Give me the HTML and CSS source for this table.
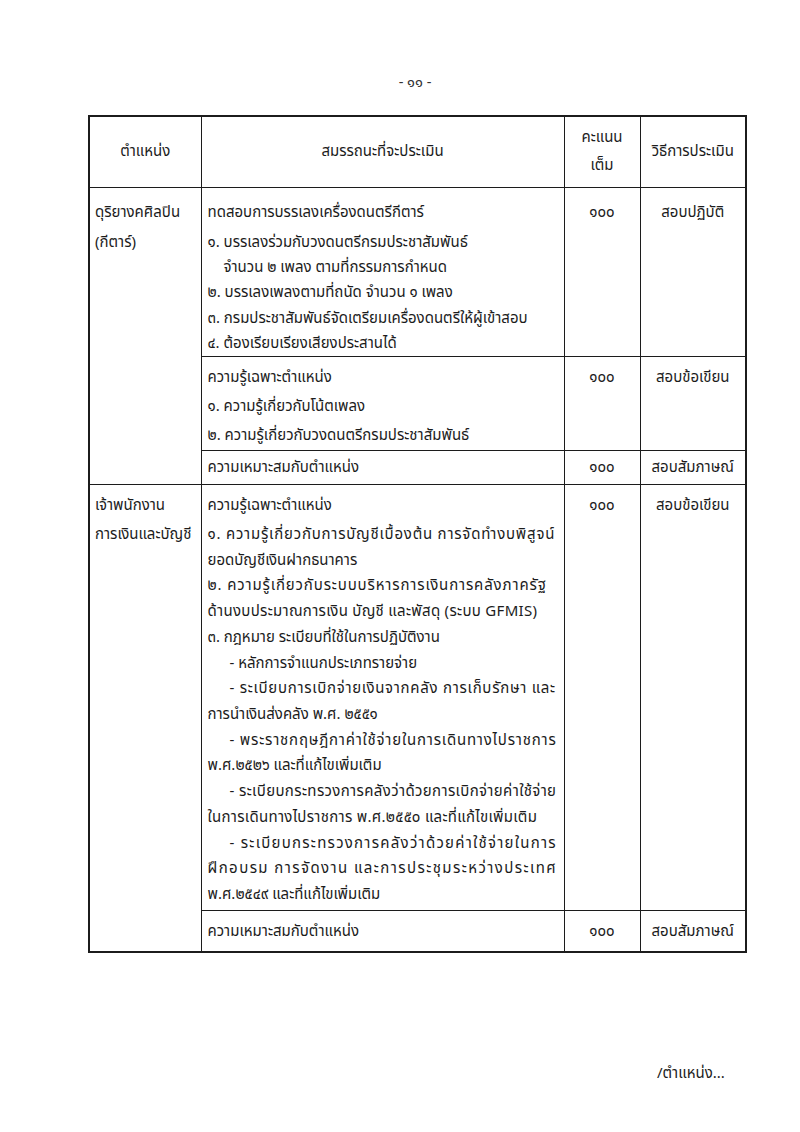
FILE: index.html
```html
<!DOCTYPE html>
<html lang="th">
<head>
<meta charset="utf-8">
<link rel="stylesheet" href="styles.css">
</head>
<body>
<div class="page">
  <div class="pageno">- ๑๑ -</div>
  <table class="grid">
    <colgroup>
      <col class="c1"><col class="c2"><col class="c3"><col class="c4">
    </colgroup>
    <thead>
      <tr class="rh">
        <th>ตำแหน่ง</th>
        <th>สมรรถนะที่จะประเมิน</th>
        <th><div>คะแนน</div><div class="mt">เต็ม</div></th>
        <th>วิธีการประเมิน</th>
      </tr>
    </thead>
    <tbody>
      <tr class="r1">
        <td rowspan="3" class="pos"><div class="l first">ดุริยางคศิลปิน</div><div class="l">(กีตาร์)</div></td>
        <td class="desc">
          <div class="l first">ทดสอบการบรรเลงเครื่องดนตรีกีตาร์</div>
          <div class="l">๑. บรรเลงร่วมกับวงดนตรีกรมประชาสัมพันธ์</div>
          <div class="l ind">จำนวน ๒ เพลง ตามที่กรรมการกำหนด</div>
          <div class="l">๒. บรรเลงเพลงตามที่ถนัด จำนวน ๑ เพลง</div>
          <div class="l">๓. กรมประชาสัมพันธ์จัดเตรียมเครื่องดนตรีให้ผู้เข้าสอบ</div>
          <div class="l">๔. ต้องเรียบเรียงเสียงประสานได้</div>
        </td>
        <td class="score"><div class="l">๑๐๐</div></td>
        <td class="method"><div class="l">สอบปฏิบัติ</div></td>
      </tr>
      <tr class="r2">
        <td class="desc">
          <div class="l">ความรู้เฉพาะตำแหน่ง</div>
          <div class="l">๑. ความรู้เกี่ยวกับโน้ตเพลง</div>
          <div class="l">๒. ความรู้เกี่ยวกับวงดนตรีกรมประชาสัมพันธ์</div>
        </td>
        <td class="score"><div class="l">๑๐๐</div></td>
        <td class="method"><div class="l">สอบข้อเขียน</div></td>
      </tr>
      <tr class="r3">
        <td class="desc"><div class="l">ความเหมาะสมกับตำแหน่ง</div></td>
        <td class="score"><div class="l">๑๐๐</div></td>
        <td class="method"><div class="l">สอบสัมภาษณ์</div></td>
      </tr>
      <tr class="r4">
        <td rowspan="2" class="pos"><div class="l first">เจ้าพนักงาน</div><div class="l">การเงินและบัญชี</div></td>
        <td class="desc">
          <div class="l first">ความรู้เฉพาะตำแหน่ง</div>
          <div class="l ls-a">๑. ความรู้เกี่ยวกับการบัญชีเบื้องต้น การจัดทำงบพิสูจน์</div>
          <div class="l">ยอดบัญชีเงินฝากธนาคาร</div>
          <div class="l ls-b">๒. ความรู้เกี่ยวกับระบบบริหารการเงินการคลังภาครัฐ</div>
          <div class="l ls-w">ด้านงบประมาณการเงิน บัญชี และพัสดุ (ระบบ GFMIS)</div>
          <div class="l">๓. กฎหมาย ระเบียบที่ใช้ในการปฏิบัติงาน</div>
          <div class="l ind2">- หลักการจำแนกประเภทรายจ่าย</div>
          <div class="l ind2 ls-c">- ระเบียบการเบิกจ่ายเงินจากคลัง การเก็บรักษา และ</div>
          <div class="l">การนำเงินส่งคลัง พ.ศ. ๒๕๕๑</div>
          <div class="l ind2 ls-d">- พระราชกฤษฎีกาค่าใช้จ่ายในการเดินทางไปราชการ</div>
          <div class="l">พ.ศ.๒๕๒๖ และที่แก้ไขเพิ่มเติม</div>
          <div class="l ind2 ls-e">- ระเบียบกระทรวงการคลังว่าด้วยการเบิกจ่ายค่าใช้จ่าย</div>
          <div class="l ls-w">ในการเดินทางไปราชการ พ.ศ.๒๕๕๐ และที่แก้ไขเพิ่มเติม</div>
          <div class="l ind2 ls-f">- ระเบียบกระทรวงการคลังว่าด้วยค่าใช้จ่ายในการ</div>
          <div class="l ls-g">ฝึกอบรม การจัดงาน และการประชุมระหว่างประเทศ</div>
          <div class="l">พ.ศ.๒๕๔๙ และที่แก้ไขเพิ่มเติม</div>
        </td>
        <td class="score"><div class="l">๑๐๐</div></td>
        <td class="method"><div class="l">สอบข้อเขียน</div></td>
      </tr>
      <tr class="r5">
        <td class="desc"><div class="l">ความเหมาะสมกับตำแหน่ง</div></td>
        <td class="score"><div class="l">๑๐๐</div></td>
        <td class="method"><div class="l">สอบสัมภาษณ์</div></td>
      </tr>
    </tbody>
  </table>
  <div class="next">/ตำแหน่ง...</div>
</div>
</body>
</html>
```

FILE: styles.css
```css
html, body {
  margin: 0;
  padding: 0;
  background: #ffffff;
}
body {
  font-family: "Noto Sans Thai", "Noto Sans", "DejaVu Sans", sans-serif;
  color: #1c1c1c;
  font-size: 15px;
}
.page {
  width: 800px;
  height: 1132px;
  position: relative;
  box-sizing: border-box;
  padding-top: 71px;
}
.pageno {
  text-align: center;
  padding-left: 30px;
  line-height: 24px;
  font-size: 14.5px;
  color: #333;
}
.grid {
  margin: 20px 0 0 88px;
  border-collapse: collapse;
  table-layout: fixed;
  width: 657px;
  border: 2px solid #1c1c1c;
}
.c1 { width: 112px; }
.c2 { width: 363px; }
.c3 { width: 76px; }
.c4 { width: 106px; }
.grid th, .grid td {
  border: 1px solid #1c1c1c;
  padding: 0;
  vertical-align: top;
}
.grid th {
  font-weight: normal;
  text-align: center;
  vertical-align: middle;
  line-height: 28px;
  height: 70px;
}
.l { line-height: 25.3px; white-space: nowrap; }
.first { margin-bottom: 4.5px; }
.pos { padding-left: 5px !important; text-align: left; }
.desc { padding-left: 6px !important; padding-right: 0 !important; }
.score, .method { text-align: center; }
.ind { padding-left: 16px; }
.ind2 { padding-left: 22px; }

.r1 td { padding-top: 12px; padding-bottom: 0; }

.r2 td { padding-top: 6px; padding-bottom: 0; }
.r2 .l { line-height: 29px; }

.r3 td { padding-top: 4px; padding-bottom: 3.5px; }

.r4 td { padding-top: 8px; padding-bottom: 2px; }
.r4 .l { line-height: 25.7px; }
.r4 .first { margin-bottom: 3.3px; }

.r5 td { padding-top: 8px; padding-bottom: 7px; }

/* justified (distributed) lines */
.ls-a { letter-spacing: 0.78px; }
.ls-b { letter-spacing: 0.86px; }
.ls-c { letter-spacing: 0.72px; }
.ls-d { letter-spacing: 0.8px; }
.ls-e { letter-spacing: 0.37px; }
.ls-f { letter-spacing: 1.26px; }
.ls-g { letter-spacing: 1.42px; }
.ls-w { letter-spacing: 0.3px; }

.next {
  position: absolute;
  left: 657px;
  top: 1062px;
  font-size: 15px;
  line-height: 24px;
}
```
